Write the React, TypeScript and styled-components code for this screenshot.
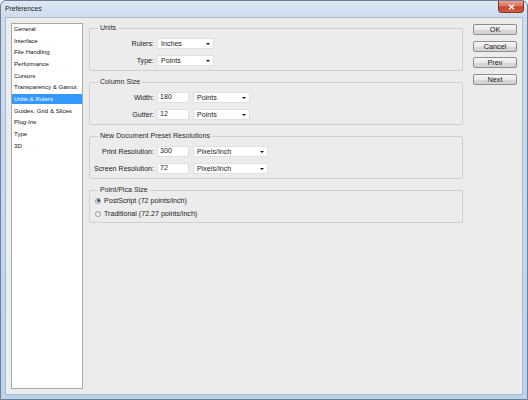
import React from 'react';
import styled, { createGlobalStyle } from 'styled-components';

const GlobalStyle = createGlobalStyle`
  html, body {
    margin: 0;
    padding: 0;
  }

  body {
    width: 528px;
    height: 400px;
    overflow: hidden;
    font-family: "Liberation Sans", Arial, sans-serif;
    color: #1c1c1c;
  }

  * {
    box-sizing: border-box;
  }
`;

const Window = styled.div`
  display: flex;
  flex-direction: column;
  width: 528px;
  height: 400px;
  padding: 0 4px 4px;
  border: 1px solid #6d7f93;
  border-radius: 6px 6px 0 0;
  background: linear-gradient(to bottom, #dde8f4 0, #cddcee 16px, #bcd3ec 100%);
`;

const TitleBar = styled.div`
  display: flex;
  justify-content: space-between;
  align-items: flex-start;
  height: 16px;
`;

const Title = styled.span`
  font-size: 6.8px;
  line-height: 16px;
  color: #1a1a1a;
`;

const CloseButton = styled.div`
  display: flex;
  align-items: center;
  justify-content: center;
  width: 26px;
  height: 12px;
  margin-right: -1px;
  border: 1px solid #8a3323;
  border-top: none;
  border-radius: 0 0 4px 4px;
  background: linear-gradient(to bottom, #eaa796 0, #d8705a 45%, #c2432c 55%, #d45f45 100%);
`;

const Client = styled.div`
  flex: 1;
  display: flex;
  gap: 6px;
  padding: 5px;
  background: #ececec;
  border: 1px solid #a9bbcf;
`;

const Sidebar = styled.ul`
  display: flex;
  flex-direction: column;
  gap: 1.67px;
  width: 72px;
  margin: 0;
  padding: 0;
  list-style: none;
  background: #fff;
  border: 1px solid #a9a9a9;
`;

const SidebarItem = styled.li<{ $selected?: boolean }>`
  height: 10px;
  padding-left: 2px;
  font-size: 6.1px;
  line-height: 10px;
  white-space: nowrap;
  color: ${p => (p.$selected ? '#fff' : '#111')};
  background: ${p => (p.$selected ? '#3399ff' : 'transparent')};
`;

const Main = styled.div`
  display: flex;
  flex-direction: column;
  gap: 6px;
  width: 374px;
`;

const Group = styled.fieldset<{ $tight?: boolean }>`
  min-width: 0;
  margin: 0;
  padding: ${p => (p.$tight ? '1px' : '5px')} 0 4px;
  border: 1px solid #d0d0d0;
  border-radius: 2px;
`;

const Legend = styled.legend`
  margin-left: 8px;
  padding: 0 2px;
  font-size: 7.1px;
  line-height: 10px;
  color: #2a2a2a;
`;

const Rows = styled.div`
  display: flex;
  flex-direction: column;
  gap: 6px;
`;

const Row = styled.div`
  display: flex;
  align-items: center;
  gap: 3px;
  height: 11px;
`;

const Label = styled.span`
  width: 64px;
  text-align: right;
  font-size: 7.1px;
  white-space: nowrap;
`;

const Field = styled.div`
  width: 32px;
  height: 11px;
  margin-right: 1px;
  padding: 0 2px;
  font-size: 7.1px;
  line-height: 9px;
  background: #fff;
  border: 1px solid #e0e0e0;
`;

const Dropdown = styled.div<{ $width: number }>`
  display: flex;
  align-items: center;
  justify-content: space-between;
  width: ${p => p.$width}px;
  height: 11px;
  padding: 0 3px 0 3px;
  font-size: 7.1px;
  background: #fff;
  border: 1px solid #e0e0e0;
`;

const Caret = styled.span`
  width: 0;
  height: 0;
  border-left: 2px solid transparent;
  border-right: 2px solid transparent;
  border-top: 2.5px solid #111;
`;

const RadioList = styled.div`
  display: flex;
  flex-direction: column;
  gap: 4px;
  padding-left: 5px;
`;

const RadioRow = styled.div`
  display: flex;
  align-items: center;
  gap: 3px;
  height: 9px;
  font-size: 7.1px;
`;

const RadioDot = styled.span<{ $checked?: boolean }>`
  display: flex;
  align-items: center;
  justify-content: center;
  width: 6px;
  height: 6px;
  border-radius: 50%;
  border: 1px solid #9a9a9a;
  background: linear-gradient(to bottom, #e4e4e4, #fbfbfb);

  &::after {
    content: '';
    display: ${p => (p.$checked ? 'block' : 'none')};
    width: 3px;
    height: 3px;
    border-radius: 50%;
    background: #1f4f8f;
  }
`;

const ButtonColumn = styled.div`
  display: flex;
  flex-direction: column;
  gap: 5.5px;
  width: 44px;
  margin-top: 1px;
  margin-left: 4px;
`;

const Button = styled.div`
  height: 11px;
  font-size: 7.3px;
  line-height: 9px;
  text-align: center;
  color: #1b1b1b;
  border: 1px solid #8e8e8e;
  border-radius: 2px;
  background: linear-gradient(to bottom, #f6f6f6 0, #e9e9e9 50%, #d9d9d9 51%, #d2d2d2 100%);
`;

const sections = [
  'General',
  'Interface',
  'File Handling',
  'Performance',
  'Cursors',
  'Transparency & Gamut',
  'Units & Rulers',
  'Guides, Grid & Slices',
  'Plug-Ins',
  'Type',
  '3D',
];

const Select: React.FC<{ width: number; value: string }> = ({ width, value }) => (
  <Dropdown $width={width}>
    <span>{value}</span>
    <Caret />
  </Dropdown>
);

export default function App() {
  return (
    <>
      <GlobalStyle />
      <Window>
        <TitleBar>
          <Title>Preferences</Title>
          <CloseButton>
            <svg width="7" height="6" viewBox="0 0 7 6">
              <path d="M1 0.8 L6 5.2 M6 0.8 L1 5.2" stroke="#fff" strokeWidth="1.4" />
            </svg>
          </CloseButton>
        </TitleBar>

        <Client>
          <Sidebar>
            {sections.map(name => (
              <SidebarItem key={name} $selected={name === 'Units & Rulers'}>
                {name}
              </SidebarItem>
            ))}
          </Sidebar>

          <Main>
            <Group>
              <Legend>Units</Legend>
              <Rows>
                <Row>
                  <Label>Rulers:</Label>
                  <Select width={57} value="Inches" />
                </Row>
                <Row>
                  <Label>Type:</Label>
                  <Select width={57} value="Points" />
                </Row>
              </Rows>
            </Group>

            <Group>
              <Legend>Column Size</Legend>
              <Rows>
                <Row>
                  <Label>Width:</Label>
                  <Field>180</Field>
                  <Select width={57} value="Points" />
                </Row>
                <Row>
                  <Label>Gutter:</Label>
                  <Field>12</Field>
                  <Select width={57} value="Points" />
                </Row>
              </Rows>
            </Group>

            <Group>
              <Legend>New Document Preset Resolutions</Legend>
              <Rows>
                <Row>
                  <Label>Print Resolution:</Label>
                  <Field>300</Field>
                  <Select width={75} value="Pixels/Inch" />
                </Row>
                <Row>
                  <Label>Screen Resolution:</Label>
                  <Field>72</Field>
                  <Select width={75} value="Pixels/Inch" />
                </Row>
              </Rows>
            </Group>

            <Group $tight>
              <Legend>Point/Pica Size</Legend>
              <RadioList>
                <RadioRow>
                  <RadioDot $checked />
                  PostScript (72 points/inch)
                </RadioRow>
                <RadioRow>
                  <RadioDot />
                  Traditional (72.27 points/inch)
                </RadioRow>
              </RadioList>
            </Group>
          </Main>

          <ButtonColumn>
            <Button>OK</Button>
            <Button>Cancel</Button>
            <Button>Prev</Button>
            <Button>Next</Button>
          </ButtonColumn>
        </Client>
      </Window>
    </>
  );
}
